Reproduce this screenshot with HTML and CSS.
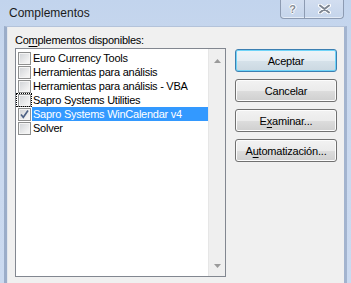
FILE: index.html
```html
<!DOCTYPE html>
<html lang="es">
<head>
<meta charset="UTF-8">
<title>Complementos</title>
<link rel="stylesheet" href="styles.css">
</head>
<body>
<div class="window">
    <div class="titlebar">
        <span class="title">Complementos</span>
        <div class="caption-btns">
            <span class="cap help">?</span>
            <span class="cap close">
                <svg width="13" height="10" viewBox="0 0 13 10">
                    <path d="M2 1.5 L11 8.5 M11 1.5 L2 8.5" stroke="#ffffff" stroke-width="4" stroke-linecap="round" fill="none"/>
                    <path d="M2 1.5 L11 8.5 M11 1.5 L2 8.5" stroke="#7d8591" stroke-width="2" stroke-linecap="round" fill="none"/>
                </svg>
            </span>
        </div>
    </div>
    <div class="client">
        <div class="main">
            <div class="left">
                <div class="label">Co<u>m</u>plementos disponibles:</div>
                <div class="listbox">
                    <ul class="items">
                        <li class="item"><span class="cell"><span class="check"></span></span><span class="name">Euro Currency Tools</span></li>
                        <li class="item"><span class="cell"><span class="check"></span></span><span class="name">Herramientas para análisis</span></li>
                        <li class="item"><span class="cell"><span class="check"></span></span><span class="name">Herramientas para análisis - VBA</span></li>
                        <li class="item"><span class="cell focus"><span class="check"></span></span><span class="name">Sapro Systems Utilities</span></li>
                        <li class="item selected"><span class="cell"><span class="check">
                            <svg width="11" height="11" viewBox="0 0 11 11"><path d="M2 5.5 L4.3 8.3 L9 1.5" stroke="#4d6185" stroke-width="1.6" fill="none"/></svg>
                        </span></span><span class="name">Sapro Systems WinCalendar v4</span></li>
                        <li class="item"><span class="cell"><span class="check"></span></span><span class="name">Solver</span></li>
                    </ul>
                    <div class="scrollbar">
                        <svg width="7" height="4" viewBox="0 0 7 4"><polygon points="3.5,0 7,4 0,4" fill="#9a9a9a"/></svg>
                        <svg width="7" height="4" viewBox="0 0 7 4"><polygon points="0,0 7,0 3.5,4" fill="#9a9a9a"/></svg>
                    </div>
                </div>
            </div>
            <div class="buttons">
                <button class="btn default">Aceptar</button>
                <button class="btn">Cancelar</button>
                <button class="btn">E<u>x</u>aminar...</button>
                <button class="btn">A<u>u</u>tomatización...</button>
            </div>
        </div>
    </div>
</div>
</body>
</html>
```

FILE: styles.css
```css
body {
    margin: 0;
    width: 351px;
    height: 283px;
    overflow: hidden;
    font-family: "Liberation Sans", Arial, sans-serif;
    font-size: 11px;
    letter-spacing: -0.25px;
    color: #000;
}
.window {
    height: 283px;
    display: flex;
    flex-direction: column;
    background: linear-gradient(to bottom, #c2d4ed, #c9d8ee 60px, #cbdaf0);
}
.titlebar {
    height: 26px;
    display: flex;
    justify-content: space-between;
    align-items: flex-start;
    flex-shrink: 0;
}
.title {
    padding: 5px 0 0 9px;
    font-size: 12px;
    letter-spacing: 0;
    line-height: 16px;
    color: #1b1b1b;
}
.caption-btns {
    display: flex;
    margin-right: 7px;
    height: 18px;
    border: 1px solid #8d9bb2;
    border-top: none;
    border-radius: 0 0 4px 4px;
    background: linear-gradient(to bottom, #d2def0, #c5d5eb);
    box-shadow: inset 0 -1px 0 #e4ecf7;
}
.cap {
    display: flex;
    align-items: center;
    justify-content: center;
}
.help {
    width: 23px;
    border-right: 1px solid #8d9bb2;
    font-weight: bold;
    font-size: 11px;
    letter-spacing: 0;
    color: #858c97;
    text-shadow: 1px 0 #fff, -1px 0 #fff, 0 1px #fff, 0 -1px #fff;
}
.close {
    width: 38px;
}
.client {
    flex: 1;
    margin: 0 4px;
    border-left: 3px solid #9badc9;
    border-right: 3px solid #a3b4cf;
    border-top: 1px solid #b4c3da;
    background: #f0f0f0;
    box-shadow: inset 1px 0 0 #e2e7ee;
    padding: 6px 6px 0 8px;
}
.main {
    display: flex;
    gap: 9px;
}
.left {
    width: 211px;
}
.label {
    line-height: 15px;
}
.label u, .btn u {
    text-decoration-thickness: 1px;
    text-underline-offset: 2px;
}
.listbox {
    display: flex;
    height: 227px;
    border: 1px solid #828790;
    background: #fff;
}
.items {
    flex: 1;
    list-style: none;
    margin: 0;
    padding: 2px 0 0 0;
}
.item {
    display: flex;
    height: 14px;
    line-height: 14px;
}
.cell {
    width: 16px;
    height: 14px;
    padding-left: 2px;
    box-sizing: border-box;
    display: flex;
    align-items: center;
}
.cell.focus {
    outline: 1px dotted #000;
    outline-offset: -1px;
}
.check {
    width: 13px;
    height: 13px;
    box-sizing: border-box;
    border: 1px solid #8e8f8f;
    background: linear-gradient(135deg, #cfd2d6, #f3f3f3 80%);
    box-shadow: inset 0 0 0 1px #f4f4f4;
    display: flex;
    align-items: center;
    justify-content: center;
}
.name {
    flex: 1;
    padding-left: 1px;
    white-space: nowrap;
}
.selected .name {
    background: #3399ff;
    color: #fff;
}
.scrollbar {
    width: 17px;
    display: flex;
    flex-direction: column;
    justify-content: space-between;
    align-items: center;
    padding: 10px 0 8px;
    box-sizing: border-box;
    background: #efefef;
    border-left: 1px solid #e6e6e6;
}
.buttons {
    display: flex;
    flex-direction: column;
    gap: 7px;
    margin-top: 16px;
}
.btn {
    width: 102px;
    height: 23px;
    padding: 0;
    font-family: "Liberation Sans", Arial, sans-serif;
    font-size: 11px;
    letter-spacing: -0.2px;
    color: #000;
    border: 1px solid #707070;
    border-radius: 3px;
    background: linear-gradient(to bottom, #f2f2f2 0%, #ebebeb 50%, #dddddd 51%, #cfcfcf 100%);
    box-shadow: inset 0 0 0 1px #fcfcfc;
}
.btn.default {
    border-color: #3c7fb1;
    box-shadow: inset 0 0 0 1px #6fd4f8;
    background: linear-gradient(to bottom, #eef4f8 0%, #e4edf3 50%, #d6e2ea 51%, #cbd8e1 100%);
}
```
